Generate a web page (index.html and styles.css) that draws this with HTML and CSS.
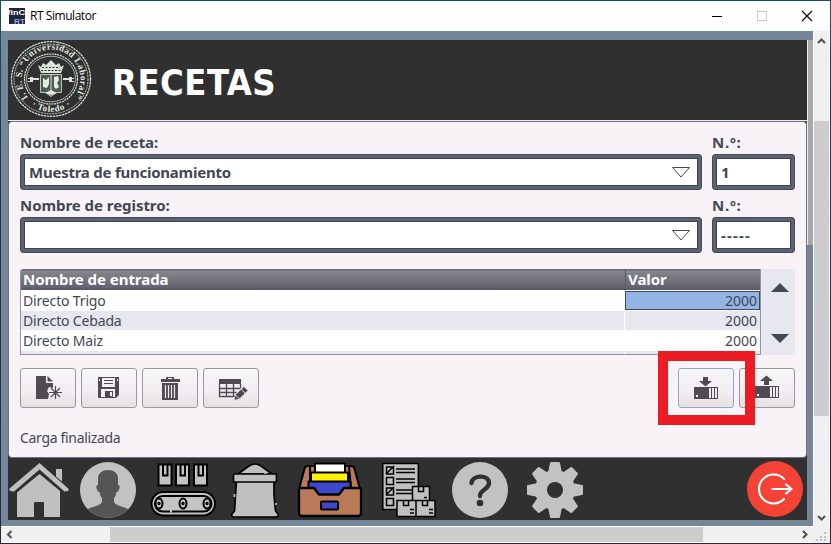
FILE: index.html
```html
<!DOCTYPE html>
<html lang="es">
<head>
<meta charset="utf-8">
<title>RT Simulator</title>
<link rel="stylesheet" href="styles.css">
</head>
<body>
<div class="window">
  <header class="titlebar">
    <svg class="app-icon" width="16" height="16" viewBox="0 0 16 16"><rect width="16" height="16" fill="#20263a"/><text x="-1" y="7" font-size="8" fill="#fff" textLength="17" lengthAdjust="spacingAndGlyphs">/inC</text><text x="5" y="15.500" font-size="8" fill="#8fa0e0" textLength="11" lengthAdjust="spacingAndGlyphs">RT</text></svg>
    <span class="caption">RT Simulator</span>
    <svg class="caption-buttons" width="110" height="14" viewBox="0 0 110 14" fill="none" shape-rendering="crispEdges"><path d="M3 7.500h10" stroke="#000"/><rect x="48.500" y="2.500" width="9" height="9" stroke="#ccc"/><path d="M93 2l10 10M103 2L93 12" stroke="#000" stroke-width="1.100" shape-rendering="auto"/></svg>
  </header>
  <div class="viewport">
    <main class="screen">
      <div class="banner">
        <svg class="seal" width="84" height="80" viewBox="8 40 84 80">
          <defs><path id="seal-top" d="M28 97.500A29.500 29.500 0 1 1 74 97.500"/><path id="seal-bottom" d="M26 100.500A33 33 0 0 0 76 100.500"/></defs>
          <g fill="none" stroke="#d9e6d9"><ellipse cx="51" cy="79" rx="39.500" ry="37.300" stroke-width="1.200" stroke-dasharray="2.500 .6"/><ellipse cx="51" cy="79" rx="37" ry="34.800" stroke-width=".8" stroke-dasharray="2 .8"/><ellipse cx="51" cy="79" rx="26.500" ry="25" stroke-width="1.200" stroke-dasharray="2 .7"/><ellipse cx="51" cy="79" rx="24.500" ry="22.800" stroke-width=".7"/></g>
          <g class="seal-text"><text><textPath href="#seal-top" textLength="131">I. E. S. “Universidad Laboral”</textPath></text><text><textPath href="#seal-bottom" startOffset="50%" text-anchor="middle" textLength="42">·  Toledo  ·</textPath></text></g>
          <g fill="#d9e6d9"><path d="M38 65l3 2 2-4 3 2 5-5 5 5 3-2 2 4 3-2-3 8H41z"/><path d="M28 78h2v-1h3v1h6v2h-6v2h-5v-1h2v-2h-2zM74 78h-2v-1h-3v1h-6v2h6v2h5v-1h-2v-2h2z"/></g>
          <path d="M40.500 74.500h21v18h-5l-5.500 4-5.500-4h-5z" fill="#4f5a50" stroke="#b7c6b5"/>
          <path d="M43 78l3 2 3-3v7l-2 4-4-1v-4zM54 77l4-1 1 4-2 3 2 4-3 2-2-2zM45 93l6-3 6 3-6 2z" fill="#e3eee3"/>
          <path d="M51 74v18" stroke="#d9e6d9"/><path d="M41 70.500h20M42 67.500h18" stroke="#303030" stroke-dasharray="2 1.500"/>
        </svg>
        <h1>RECETAS</h1>
      </div>
      <section class="recipe">
        <div class="fields">
          <label>Nombre de receta:</label><label class="number">N.º:</label>
          <div class="field"><span>Muestra de funcionamiento</span><svg width="20" height="13" viewBox="0 0 20 13"><path d="M.5 1.500h17L9 11z" fill="#fff" stroke="#454956"/></svg></div>
          <div class="field number">1</div>
          <label>Nombre de registro:</label><label class="number">N.º:</label>
          <div class="field"><span></span><svg width="20" height="13" viewBox="0 0 20 13"><path d="M.5 1.500h17L9 11z" fill="#fff" stroke="#454956"/></svg></div>
          <div class="field number empty">-----</div>
        </div>
        <div class="table-wrap">
          <div class="table">
            <div class="row head"><span>Nombre de entrada</span><span>Valor</span></div>
            <div class="row"><span>Directo Trigo</span><span class="selected">2000</span></div>
            <div class="row alt"><span>Directo Cebada</span><span>2000</span></div>
            <div class="row"><span>Directo Maiz</span><span>2000</span></div>
            <div class="row alt"><span></span><span></span></div>
          </div>
          <div class="stepper"><svg width="18" height="9" viewBox="0 0 18 9"><path d="M0 9L9 0l9 9z" fill="#414a55"/></svg><svg width="18" height="9" viewBox="0 0 18 9"><path d="M0 0h18L9 9z" fill="#414a55"/></svg></div>
        </div>
        <div class="toolbar">
          <button><svg viewBox="20 368 56 40"><path d="M36 376h10v7h7v5l-4-1-2 4 2 3-1 5H36z" fill="#514a50"/><path d="M47.500 376v5.500H53z" fill="#514a50"/><path d="M55.500 386v13M49 392.500h13M51 388l9 9M60 388l-9 9" stroke="#514a50" stroke-width="1.200"/></svg></button>
          <button><svg viewBox="81 368 56 40"><path d="M98 377h21v18l-3 3H98z" fill="#514a50"/><path d="M102 378h13v9h-13zM101 389h14v8h-14z" fill="#f3eff2"/><path d="M104 380.500h9M104 383.500h9" stroke="#514a50"/><path d="M105 391h8v6h-8z" fill="#514a50"/><path d="M110 392h2v4h-2z" fill="#f3eff2"/><path d="M99 379h1v2h-1zM117 379h1v2h-1z" fill="#f3eff2"/></svg></button>
          <button><svg viewBox="142 368 56 40"><path d="M166 377h8v2h6v3h-19v-3h5zM168 378v1h4v-1zM162 383h16v17h-16z" fill="#514a50"/><path d="M165.500 385v13M168.500 385v13M171.500 385v13M174.500 385v13" stroke="#eeeaed" stroke-width="1.200"/></svg></button>
          <button><svg viewBox="203 368 56 40"><path d="M219 379h22v5h-22z" fill="#514a50"/><path d="M219.500 384v12.500H240M240.500 384v4M219.500 388.500h21M219.500 392.500h17M226.500 384v12M233.500 384v12" fill="none" stroke="#514a50" stroke-width="1.300"/><path d="M234 400.500l1.500-6 8.500-8 4 4-8.500 8.500z" fill="#514a50" stroke="#f0ecef" stroke-width=".7"/><path d="M241 389l4 4M235.500 395l4 4" stroke="#eee" stroke-width=".8"/></svg></button>
          <button class="transfer focused"><svg viewBox="678 368 56 40"><path d="M703 377h5v4h4l-6.500 5.500L699 381h4zM694 387h24v12h-24z" fill="#514a50"/><path d="M696 395h2v2h-2zM709 388h2v10h-2zM712 388h2v10h-2zM715 388h2v10h-2z" fill="#eeeaed"/></svg><i class="highlight"></i></button>
          <button><svg viewBox="739 368 56 40"><path d="M764 385v-4h-4l6.500-5.500L773 381h-4v4zM755 386h24v12h-24z" fill="#514a50"/><path d="M757 394h2v2h-2zM770 387h2v10h-2zM773 387h2v10h-2zM776 387h2v10h-2z" fill="#eeeaed"/></svg></button>
        </div>
        <p class="status">Carga finalizada</p>
      </section>
      <nav class="dock">
        <svg width="64" height="61" viewBox="8 459 64 61" fill="#c0c0c0"><path d="M56 469h6v12.500l-6-5z"/><path d="M39.500 463l28.700 25.500q2 3-3.700 3L39.500 469.500 14 491.500q-6 0-4.500-3z"/><path d="M39.500 474L60 491v25.500q0 .5-.5 .5H44v-14q0-1-1-1h-8q-1 0-1 1v14H17.500q-.5 0-.5-.5V492.500z"/></svg>
        <svg width="78" height="61" viewBox="72 459 78 61"><clipPath id="portrait"><circle cx="108" cy="490" r="28"/></clipPath><circle cx="108" cy="490" r="28" fill="#c2c2c2"/><path clip-path="url(#portrait)" d="M98 478q1-8 10-8t10 8v7q3 1 1 4-.5 3-2.500 3-.5 4-2.500 6v4q1 3 12 6 4 2 5 5v5H85v-5q1-3 5-5 11-3 12-6v-4q-2-2-2.500-6-2 0-2.500-3-2-3 1-4z" fill="#555"/></svg>
        <svg width="76" height="61" viewBox="150 459 76 61" stroke="#000" stroke-width="2" fill="#c4c4c4"><path d="M158.500 464.500h13v21h-13zM163 464.500h4.500v11H163zM176 464.500h13v21h-13zM180.500 464.500h4.500v11h-4.500zM194 464.500h13v21h-13zM198.500 464.500h4.500v11h-4.500z"/><rect x="151.500" y="492" width="63.500" height="23.500" rx="11.700" stroke-width="2"/><rect x="155" y="496" width="56.500" height="15.500" rx="7.700"/><g><ellipse cx="159" cy="503.500" rx="3.500" ry="5"/><ellipse cx="183" cy="503.500" rx="3.500" ry="5"/><ellipse cx="207" cy="503.500" rx="3.500" ry="5"/><circle cx="159" cy="503.500" r=".7"/><circle cx="183" cy="503.500" r=".7"/><circle cx="207" cy="503.500" r=".7"/></g><path d="M171 508.500v4" stroke="#c4c4c4"/></svg>
        <svg width="70" height="61" viewBox="226 459 70 61" fill="#c0c0c0" stroke="#000" stroke-width="1.700" stroke-linejoin="round"><path d="M238 474l11-8q6-4 12 0l11 8z"/><path d="M236.500 481h37.500v14l1.500 16 2.500 3q1 3-2 3h-42q-3 0-2-3l2.500-3 1-16z"/><rect x="233.500" y="474" width="43" height="8" rx="1"/><path d="M264 473h3M234.500 494v3M276 503v2" stroke="#c0c0c0"/></svg>
        <svg width="84" height="61" viewBox="296 459 84 61" stroke="#000" stroke-width="2" stroke-linejoin="round"><path d="M308 466h43l3 1 6 22h-61l6-22z" fill="#b97a57"/><path d="M310 466v22M349 466l2 22" fill="none"/><path d="M315 463.500h30v10h-30z" fill="#fff"/><path d="M311 472.500h37v10h-37z" fill="#fff200"/><path d="M308.500 481.500h42v14h-42z" fill="#3f48cc"/><path d="M300 488h14l5 6.500h20l5-6.500h15q2 0 2 2v23q0 3-3 3h-56q-3 0-3-3v-23q0-2 1-2z" fill="#b97a57" stroke-width="2.300"/><rect x="321" y="501.500" width="17" height="8" rx="1" fill="#3f48cc"/></svg>
        <svg width="70" height="61" viewBox="380 459 70 61" stroke="#000" stroke-width="1.500" fill="#c0c0c0"><path d="M382.800 463.500h35.500v46h-35.500z"/><path d="M386.500 467h7v7h-7zM386.500 477.500h7v7h-7zM386.500 488h7v7h-7zM386.500 498.500h7v7h-7zM396 469h19M396 472.500h19M396 479h19M396 482.500h19M396 490h16M396 493.500h16M387 473l7-7M387 494l7-7"/><path d="M412.500 486.500h17v14h-17zM397 500.500h19v16h-19zM416 500.500h19v16h-19z"/><path d="M418.500 486.500v5h5v-5M403.500 500.500v5h5v-5M422.500 500.500v5h5v-5M424 497.500h3M410 509.500h4M410 513h4M429 509.500h4M429 513h4" fill="none"/></svg>
        <svg width="74" height="61" viewBox="450 459 74 61"><circle cx="480" cy="490" r="28" fill="#c2c2c2"/><path d="M471.500 483c1-8 17-9 17.500 0 0 7-9 6-9 13" fill="none" stroke="#303030" stroke-width="4.400" stroke-linecap="round"/><circle cx="480" cy="503" r="3.300" fill="#303030"/></svg>
        <svg width="60" height="61" viewBox="524 459 60 61"><g transform="translate(555 490)" fill="#c2c2c2"><circle r="20"/><g id="cog"><path d="M-7-17L-5-27q.2-1 1-1h8q.8 0 1 1L7-17z"/><path d="M-7-17L-5-27q.2-1 1-1h8q.8 0 1 1L7-17z" transform="rotate(45)"/><path d="M-7-17L-5-27q.2-1 1-1h8q.8 0 1 1L7-17z" transform="rotate(90)"/><path d="M-7-17L-5-27q.2-1 1-1h8q.8 0 1 1L7-17z" transform="rotate(135)"/></g><use href="#cog" transform="rotate(180)"/><circle r="8" fill="#303030"/></g></svg>
        <svg class="exit" width="60" height="61" viewBox="745 459 60 61"><circle cx="775" cy="489" r="28" fill="#f44336"/><path d="M784 479a14.500 14.500 0 1 0 0 20M772.500 489h19M786 484.500l5.500 4.500-5.500 4.500" fill="none" stroke="#fff" stroke-width="2.200" stroke-linecap="round" stroke-linejoin="round"/></svg>
      </nav>
    </main>
    <div class="edge"></div>
  </div>
  <div class="vscroll"><svg width="15" height="15" viewBox="0 0 15 15"><path d="M4 10l3.500-3.500L11 10" fill="none" stroke="#505050" stroke-width="2"/></svg><i></i><svg width="15" height="15" viewBox="0 0 15 15"><path d="M4 5l3.500 3.500L11 5" fill="none" stroke="#505050" stroke-width="2"/></svg></div>
  <div class="hscroll"><svg width="15" height="15" viewBox="0 0 15 15"><path d="M10.500 4L7 7.500l3.500 3.500" fill="none" stroke="#505050" stroke-width="2"/></svg><i></i><svg width="15" height="15" viewBox="0 0 15 15"><path d="M5 4l3.500 3.500L5 11" fill="none" stroke="#505050" stroke-width="2"/></svg></div>
  <div class="grip"><svg width="15" height="15" viewBox="0 0 15 15"><path d="M11 6h2v2h-2zM11 10h2v2h-2zM7 10h2v2H7zM11 13h2v2h-2zM7 13h2v2H7zM3 13h2v2H3z" fill="#bfbfbf"/></svg></div>
</div>
</body>
</html>
```
FILE: styles.css
```css
* { box-sizing: border-box; }
html, body { margin: 0; }
body { width: 831px; height: 544px; overflow: hidden; background: linear-gradient(#17555a, #15384c 30%, #252a38); font-family: "Noto Sans", sans-serif; }
svg { display: block; flex: none; }
.window { display: grid; grid-template: 30px 495px 17px / 812px 17px; margin: 1px; background: #fff; width: 829px; height: 542px; }
.titlebar { grid-column: 1 / 3; display: flex; align-items: center; padding-left: 8px; }
.app-icon { font-family: "Liberation Sans", sans-serif; font-weight: bold; }
.caption { font: 12px/16px "Open Sans", sans-serif; letter-spacing: -.45px; margin-left: 5px; color: #000; }
.caption-buttons { margin: 0 11px 0 auto; }
.viewport { display: flex; background: #758698; padding: 9px 0 6px 7px; }
.screen { width: 799px; height: 480px; background: #303030; display: flex; flex-direction: column; }
.edge { width: 6px; height: 205px; background: #a8a8a8; border-left: 1px solid #eee; }
.banner { height: 81px; display: flex; align-items: center; border-bottom: 1px solid #eee; }
.seal-text { font-family: "Liberation Serif", serif; font-size: 9px; font-weight: bold; fill: #e3eee3; }
h1 { margin: 5px 0 0 20px; color: #fff; font-family: "DejaVu Sans Condensed", "DejaVu Sans", sans-serif; font-stretch: condensed; font-size: 36px; line-height: 40px; letter-spacing: .5px; }
.recipe { height: 337px; background: #f7f3f7; border: 1px solid #6b7080; border-radius: 4px; padding: 10px 11px 0; color: #424754; }
.fields { display: grid; grid-template: 22px 36px 27px 36px / 682px 83px; column-gap: 10px; font-size: 15px; font-weight: bold; }
label { align-self: end; line-height: 22px; padding-bottom: 1px; margin-top: -1px; letter-spacing: -.05px; }
label.number { letter-spacing: .8px; }
.field { border: 4px solid #5c6270; border-radius: 4px; background: #fff; box-shadow: inset 0 0 0 1px #3e4350; outline: 1px solid #454a57; outline-offset: -1px; display: flex; align-items: center; justify-content: space-between; padding: 0 6px 0 5px; letter-spacing: -.24px; }
.field.empty { letter-spacing: 1.2px; }
.table-wrap { display: flex; margin-top: 16px; height: 86px; }
.table { width: 741px; border: 1px solid #9294a0; border-top: 0; border-radius: 3px 0 0; background: #fff; overflow: hidden; font-size: 14px; }
.row { display: grid; grid-template-columns: 603px 135px; column-gap: 1px; height: 19px; line-height: 19px; margin-bottom: 1px; }
.row span { padding: 0 2px; background: #fff; letter-spacing: -.16px; }
.row span:last-child { text-align: right; padding-right: 3px; letter-spacing: 0; }
.row.alt span { background: #e6e7ef; }
.row.head { height: 21px; background: linear-gradient(#606270, #85868b 12%, #626370 88%, #555763); font-weight: bold; font-size: 15px; line-height: 21px; color: #fff; }
.row.head span { background: none; letter-spacing: -.05px; }
.row.head span:last-child { text-align: left; border-left: 1px solid #555763; }
.row .selected { background: #94b4e6; outline: 1px solid #3e4858; outline-offset: -1px; }
.stepper { width: 34px; background: #e6e7ef; display: flex; flex-direction: column; align-items: center; justify-content: space-between; padding: 14px 0 12px 3px; }
.toolbar { display: flex; gap: 5px; margin-top: 13px; }
button { position: relative; width: 56px; height: 40px; padding: 0; border: 1px solid #9b97a0; border-radius: 3px; background: linear-gradient(#f7f7f7, #f1edf1 60%, #e7e0e2); }
button svg { width: 56px; height: 40px; margin: -1px; }
.transfer { margin-left: auto; }
.focused { border-color: #94a7c6; z-index: 2; }
.highlight { position: absolute; left: -21px; top: -18px; width: 97px; height: 74px; border: 10px solid #ed1c24; }
.status { margin: 20px 0 0; font-size: 14px; line-height: 20px; letter-spacing: -.32px; }
.dock { display: flex; height: 61px; margin-top: 1px; }
.exit { margin-left: auto; margin-right: 2px; }
.vscroll, .hscroll { background: #f0f0f0; display: flex; }
.vscroll { flex-direction: column; justify-content: space-between; border-left: 1px solid #fff; border-right: 1px solid #fff; padding: 2px 0 0; }
.vscroll i { height: 295px; margin: 73px 0 auto; background: #cdcdcd; }
.hscroll { border-top: 1px solid #fff; border-bottom: 1px solid #fff; justify-content: space-between; }
.hscroll i { width: 593px; margin: 0 auto 0 94px; background: #cdcdcd; }
.grip { background: #f0f0f0; }
```
